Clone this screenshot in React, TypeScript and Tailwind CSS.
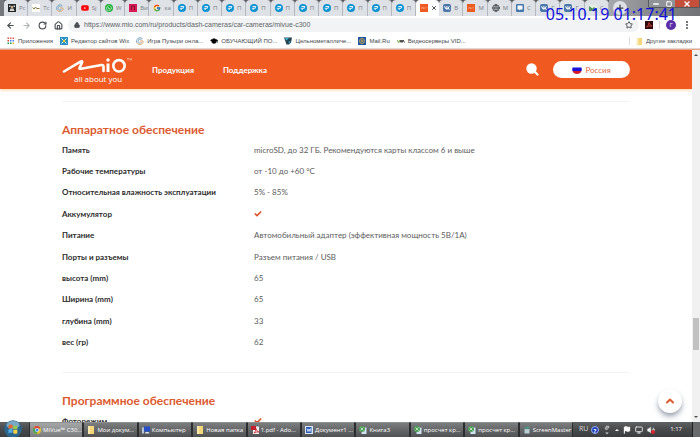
import { ReactNode } from 'react';
import clsx from 'clsx';
import {
  ArrowLeft,
  ArrowRight,
  Check,
  ChevronUp,
  Flag,
  Globe,
  GraduationCap,
  House,
  Lock,
  Minus,
  Monitor,
  MoreVertical,
  Plus,
  RotateCw,
  Square,
  Star,
  Volume2,
  X,
} from 'lucide-react';
import { FaWhatsapp, FaYoutube, FaVk } from 'react-icons/fa';
import { FcGoogle } from 'react-icons/fc';

type IconName =
  | 'dark'
  | 'wave'
  | 'swirl'
  | 'youtube'
  | 'whatsapp'
  | 'pink'
  | 'google'
  | 'blue'
  | 'mio'
  | 'vk'
  | 'globe'
  | 'chat'
  | 'photo';

interface Tab {
  icon: IconName;
  title: string;
  active?: boolean;
}

const tabs: Tab[] = [
  { icon: 'dark', title: 'Рс' },
  { icon: 'wave', title: 'Тс' },
  { icon: 'swirl', title: 'И' },
  { icon: 'youtube', title: 'Sj' },
  { icon: 'whatsapp', title: 'W' },
  { icon: 'pink', title: 'Ви' },
  { icon: 'google', title: 'ка' },
  ...Array.from({ length: 10 }, (): Tab => ({ icon: 'blue', title: 'П' })),
  { icon: 'mio', title: '', active: true },
  { icon: 'vk', title: 'В' },
  { icon: 'mio', title: 'М' },
  { icon: 'globe', title: 'М' },
  { icon: 'chat', title: 'С' },
  { icon: 'vk', title: 'Г' },
  { icon: 'vk', title: 'Г' },
  { icon: 'photo', title: 'С' },
];

const hardware: [string, string | true][] = [
  ['Память', 'microSD, до 32 ГБ. Рекомендуются карты классом 6 и выше'],
  ['Рабочие температуры', 'от -10 до +60 °C'],
  ['Относительная влажность эксплуатации', '5% - 85%'],
  ['Аккумулятор', true],
  ['Питание', 'Автомобильный адаптер (эффективная мощность 5В/1А)'],
  ['Порты и разъемы', 'Разъем питания / USB'],
  ['высота (mm)', '65'],
  ['Ширина (mm)', '65'],
  ['глубина (mm)', '33'],
  ['вес (гр)', '62'],
];

function SwirlIcon() {
  return (
    <svg viewBox="0 0 16 16" className="size-2 shrink-0" fill="none" strokeWidth="2">
      <path d="M13 3.5A7 7 0 0 0 2 12" stroke="#7fa9c4" />
      <path d="M2 12a7 7 0 0 0 12-1V8H8" stroke="#e2a86a" />
      <path d="M11 5.5A4 4 0 1 0 11 11" stroke="#86acc2" />
    </svg>
  );
}

function Favicon({ name }: { name: IconName }) {
  switch (name) {
    case 'dark':
      return (
        <svg viewBox="0 0 16 16" className="size-2 shrink-0">
          <rect width="16" height="16" fill="#23272b" />
          <path d="M2 3h3v3H2zM11 3h3v3h-3zM3 14l2-5h6l2 5z" fill="#d5d5d0" />
          <circle cx="8" cy="6" r="2.5" fill="#c9a986" />
        </svg>
      );
    case 'wave':
      return (
        <svg viewBox="0 0 16 16" className="size-2 shrink-0" fill="none">
          <rect width="16" height="16" fill="#fff" />
          <path d="M1 7l3 3 3-4 2 3h6" stroke="#8a7b3c" strokeWidth="2" />
        </svg>
      );
    case 'swirl':
      return <SwirlIcon />;
    case 'youtube':
      return <FaYoutube className="size-2 shrink-0 text-[#f00]" />;
    case 'whatsapp':
      return (
        <span className="grid size-2 shrink-0 place-items-center rounded-full bg-[#1faf38] text-white">
          <FaWhatsapp className="size-1.5" />
        </span>
      );
    case 'pink':
      return (
        <svg viewBox="0 0 16 16" className="size-2 shrink-0">
          <rect width="16" height="16" fill="#d81b52" />
          <path d="M5 12V4h6v8" stroke="#7d1537" strokeWidth="2" fill="none" />
        </svg>
      );
    case 'google':
      return <FcGoogle className="size-2 shrink-0" />;
    case 'blue':
      return (
        <svg viewBox="0 0 16 16" className="size-2 shrink-0">
          <circle cx="8" cy="8" r="8" fill="#0d92d2" />
          <path d="M3.500 8.500h3.500L6 12M5 5h6.500l-1 3.500H7" stroke="#fff" strokeWidth="1.800" fill="none" />
        </svg>
      );
    case 'mio':
      return (
        <svg viewBox="0 0 16 16" className="size-2 shrink-0">
          <rect width="16" height="16" fill="#ee5a20" />
          <path d="M2 9l4-3v3l4-1M12 6v3" stroke="#ffc9b0" strokeWidth="1.200" fill="none" />
        </svg>
      );
    case 'vk':
      return (
        <span className="grid size-2 shrink-0 place-items-center rounded-xs bg-[#4a76a8] text-white">
          <FaVk className="size-1.5" />
        </span>
      );
    case 'globe':
      return <Globe className="size-2 shrink-0 text-[#4c5054]" strokeWidth={3} />;
    case 'chat':
      return (
        <svg viewBox="0 0 16 16" className="size-2 shrink-0">
          <rect width="16" height="16" rx="2" fill="#4377ad" />
          <path d="M3 3h10v8H9l-2 2v-2H3z" fill="#fff" />
        </svg>
      );
    case 'photo':
      return (
        <svg viewBox="0 0 16 16" className="size-2 shrink-0">
          <rect width="16" height="12" y="2" fill="#e7efe4" />
          <path d="M0 4l7 5 3-3 6 6v2H0z" fill="#4f8f5d" />
        </svg>
      );
  }
}

function TabStrip() {
  return (
    <div className="flex h-4 bg-[#74777c] pl-1">
      <div className="flex min-w-0 flex-1 bg-gradient-to-b from-[#55585c] from-20% to-[#dee1e6] to-20%">
        {tabs.map((tab, i) => (
          <button
            key={i}
            aria-label={tab.title || 'MiVue C300'}
            className={clsx(
              'flex min-w-0 flex-1 items-center gap-[3px] rounded-t-sm pl-1 text-[6px]',
              tab.active ? 'bg-white' : 'border-r border-[#b4b8be] bg-[#dee1e6] text-[#797d82]',
            )}
          >
            <Favicon name={tab.icon} />
            {tab.active ? <X className="size-1.5 shrink-0 text-[#4d5156]" strokeWidth={4} /> : tab.title}
          </button>
        ))}
      </div>
      <div className="flex w-[91px] items-start justify-between bg-gradient-to-r from-[#a5a8ac] via-[#85878a] to-[#707275] pl-1">
        <button aria-label="Новая вкладка" className="mt-px grid size-3.5 place-items-center rounded-full bg-[#dee1e6]">
          <Plus className="size-2.5 text-[#3f4347]" strokeWidth={3} />
        </button>
        <div className="flex h-2 overflow-hidden rounded-b-xs border-x border-b border-[#55585c] text-white">
          <button aria-label="Свернуть" className="grid w-3.5 place-items-center bg-[#8f9296]">
            <Minus className="size-2" strokeWidth={4} />
          </button>
          <button aria-label="Свернуть в окно" className="grid w-3 place-items-center bg-[#8f9296]">
            <Square className="size-1.5" strokeWidth={4} />
          </button>
          <button aria-label="Закрыть" className="grid w-6 place-items-center bg-[#c4503c]">
            <X className="size-2" strokeWidth={4} />
          </button>
        </div>
      </div>
    </div>
  );
}

function AddressBar() {
  return (
    <div className="flex h-[18px] items-center pr-2 pl-1.5 text-[#4b4f54]">
      <div className="flex w-[62px] items-center gap-[7px]">
        <button aria-label="Назад"><ArrowLeft className="size-[9px]" strokeWidth={3} /></button>
        <button aria-label="Вперёд"><ArrowRight className="size-[9px] text-[#b4b7ba]" strokeWidth={3} /></button>
        <button aria-label="Обновить"><RotateCw className="size-[9px]" strokeWidth={3} /></button>
        <button aria-label="Главная"><House className="size-[9px]" strokeWidth={3} /></button>
      </div>
      <div className="flex h-3.5 min-w-0 flex-1 items-center gap-1 rounded-full bg-[#f1f3f4] px-1.5">
        <Lock className="size-1.5 shrink-0 fill-current" strokeWidth={3} />
        <input
          aria-label="Адресная строка"
          className="min-w-0 flex-1 bg-transparent font-['Liberation_Sans',sans-serif] text-[7px] text-[#5f6368] outline-none"
          defaultValue="https://www.mio.com/ru/products/dash-cameras/car-cameras/mivue-c300"
        />
        <button aria-label="Добавить в закладки"><Star className="size-2" strokeWidth={3} /></button>
      </div>
      <button aria-label="Adobe Acrobat" className="ml-1.5 bg-[#2b0b0b]">
        <svg viewBox="0 0 16 16" className="size-2" fill="none">
          <path d="M3 12q5-3 5-9 1 6 6 7-6-1-11 2" stroke="#e4483c" strokeWidth="1.500" />
        </svg>
      </button>
      <span className="mx-1.5 h-2 w-px bg-[#dadce0]" />
      <button className="grid size-2.5 place-items-center rounded-full bg-[#5b2fa8] text-[6px] text-white">Г</button>
      <button aria-label="Меню" className="ml-1.5"><MoreVertical className="size-2.5" strokeWidth={3} /></button>
    </div>
  );
}

function Bookmark({ icon, children }: { icon: ReactNode; children: ReactNode }) {
  return (
    <a href="#" className="flex items-center gap-[3px] whitespace-nowrap">
      {icon}
      {children}
    </a>
  );
}

function FolderIcon({ className }: { className: string }) {
  return (
    <svg viewBox="0 0 16 16" className={className}>
      <path d="M2 0h12v16H2z" fill="#f5d77a" />
      <path d="M2 0h4v16H2z" fill="#fbe9ae" />
    </svg>
  );
}

function BookmarksBar() {
  return (
    <nav className="flex h-[15px] items-center gap-[7px] border-b border-[#e3d6d0] pr-2 pl-[7px] font-['Liberation_Sans',sans-serif] text-[6px] text-[#43474c]">
      <Bookmark
        icon={
          <svg viewBox="0 0 16 16" className="size-2">
            <path d="M1 1h3v3H1zM1 6h3v3H1z" fill="#db4437" />
            <path d="M6 1h3v3H6zM11 1h3v3h-3z" fill="#e0604f" />
            <path d="M6 6h3v3H6zM11 6h3v3h-3z" fill="#4285f4" />
            <path d="M1 11h3v3H1zM6 11h3v3H6z" fill="#0f9d58" />
            <path d="M11 11h3v3h-3z" fill="#f4b400" />
          </svg>
        }
      >
        Приложения
      </Bookmark>
      <Bookmark
        icon={
          <svg viewBox="0 0 16 16" className="size-2">
            <rect width="16" height="16" fill="#2a8fc4" />
            <path d="M3 3l10 10M13 3L3 13" stroke="#fff" strokeWidth="2" />
            <circle cx="8" cy="8" r="2.500" fill="#f4d02e" />
          </svg>
        }
      >
        Редактор сайтов Wix
      </Bookmark>
      <Bookmark icon={<SwirlIcon />}>Игра Пузыри онла...</Bookmark>
      <Bookmark icon={<GraduationCap className="size-2 fill-black text-black" />}>ОБУЧАЮЩИЙ ПО...</Bookmark>
      <Bookmark
        icon={
          <svg viewBox="0 0 16 16" className="size-2">
            <path d="M0 1h16l-2 10-4 4H5z" fill="#25434f" />
            <path d="M1 2h9l-5 5zM9 9h5l-4 4z" fill="#35b4cf" />
          </svg>
        }
      >
        Цельнометалличе...
      </Bookmark>
      <Bookmark
        icon={
          <svg viewBox="0 0 16 16" className="size-2" fill="none">
            <rect width="16" height="16" fill="#1d56a5" />
            <circle cx="8" cy="8" r="5" stroke="#f2b53c" strokeWidth="1.500" />
            <circle cx="8" cy="8" r="2" stroke="#f2b53c" strokeWidth="1.500" />
          </svg>
        }
      >
        Mail.Ru
      </Bookmark>
      <Bookmark
        icon={
          <svg viewBox="0 0 16 16" className="size-2" fill="none" strokeWidth="2">
            <path d="M0 6l3 5 3-5" stroke="#6fa53a" />
            <path d="M6 11l2-5 2 5 2-5 3 5" stroke="#333" />
          </svg>
        }
      >
        Видеосерверы VID...
      </Bookmark>
      <div className="ml-auto flex items-center gap-1.5">
        <span className="h-2 w-px bg-[#dadce0]" />
        <Bookmark icon={<FolderIcon className="size-[7px]" />}>Другие закладки</Bookmark>
      </div>
    </nav>
  );
}

function MioLogo() {
  return (
    <a href="#" aria-label="Mio" className="flex w-[70px] flex-col text-white">
      <svg viewBox="0 0 70 17" className="h-[17px] w-[70px]" fill="none" stroke="currentColor">
        <path d="M2 14.500L18.500 4.600q2.500-1.200 1.500 1L17.500 11Q17 12 19 11.700L39.500 8q2-.3 2 1.500V14" strokeWidth="2.600" strokeLinejoin="round" strokeLinecap="round" />
        <path d="M46 6.500V15" strokeWidth="3" />
        <circle cx="46" cy="3" r="1.700" fill="currentColor" stroke="none" />
        <circle cx="57" cy="8.800" r="5.700" strokeWidth="2.600" />
        <path d="M65 1.500h2M66 1.500v2M68 3.500v-2l.8 1 .8-1v2" strokeWidth=".4" />
      </svg>
      <span className="pl-3 font-['Open_Sans',sans-serif] text-[8px] leading-[9px]">all about you</span>
    </a>
  );
}

function SiteHeader() {
  return (
    <header className="flex h-[39px] shrink-0 items-center bg-[#f05a20] px-[62px] text-white shadow-sm shadow-orange-200">
      <MioLogo />
      <nav className="ml-5 flex gap-[29px] text-[8px] font-bold">
        <a href="#">Продукция</a>
        <a href="#">Поддержка</a>
      </nav>
      <button aria-label="Поиск" className="ml-auto">
        <svg viewBox="0 0 13 13" className="size-[13px]">
          <circle cx="5.500" cy="5.500" r="5.200" fill="currentColor" />
          <path d="M8.500 8.500l3 3" stroke="currentColor" strokeWidth="2.200" strokeLinecap="round" />
        </svg>
      </button>
      <button className="ml-3.5 flex h-[17px] w-[77px] items-center justify-center gap-[3px] rounded-full bg-white text-[8px] text-[#e0683c]">
        <svg viewBox="0 0 10 10" className="size-[10px]">
          <path d="M.6 2.500h8.800a4.700 4.700 0 0 1 .1 3.500H.5a4.700 4.700 0 0 1 .1-3.500z" fill="#1b12d8" />
          <path d="M.5 6h9a4.700 4.300 0 0 1-9 0z" fill="#d51a2b" />
        </svg>
        Россия
      </button>
    </header>
  );
}

function SpecTable({ title, rows, className }: { title: string; rows: [string, string | true][]; className?: string }) {
  return (
    <section className="border-t border-[#f3f3f3] pt-5">
      <h2 className="text-[12px] leading-4 font-bold text-[#dc5c30]">{title}</h2>
      <table className={clsx('mt-px w-full text-left text-[8px] leading-3', className)}>
        <tbody>
          {rows.map(([label, value]) => (
            <tr key={label} className="h-[21px]">
              <th className="w-48 p-0 font-bold text-[#2c2c2c]">{label}</th>
              <td className="p-0 text-[#5c5c5c]">
                {value === true ? <Check aria-label="Да" className="size-2 text-[#dc5528]" strokeWidth={5} /> : value}
              </td>
            </tr>
          ))}
        </tbody>
      </table>
    </section>
  );
}

function Scrollbar() {
  return (
    <div className="flex w-2 shrink-0 flex-col items-center bg-[#f1f1f1] py-1">
      <span className="border-x-2 border-b-2 border-x-transparent border-b-[#505050]" />
      <span className="grow-4" />
      <span className="h-8 w-1.5 bg-[#c1c1c1]" />
      <span className="grow" />
      <span className="border-x-2 border-t-2 border-x-transparent border-t-[#505050]" />
    </div>
  );
}

function ExcelIcon() {
  return (
    <svg viewBox="0 0 16 16" className="size-2 shrink-0">
      <path d="M5 3h10v13H5z" fill="#cfe3f0" />
      <circle cx="6" cy="6" r="6" fill="#4f9f58" />
      <path d="M3 3l6 6M9 3L3 9" stroke="#d8f0d4" strokeWidth="1.500" />
    </svg>
  );
}

function ChromeIcon() {
  return (
    <svg viewBox="0 0 16 16" className="size-2 shrink-0">
      <circle cx="8" cy="8" r="8" fill="#e8c22c" />
      <path d="M1 4a8 8 0 0 1 14 0L8 8z" fill="#db4a39" />
      <path d="M1 4a8 8 0 0 0 6 12l3-7z" fill="#3fa554" />
      <circle cx="8" cy="8" r="4" fill="#fff" />
      <circle cx="8" cy="8" r="3" fill="#4285f4" />
    </svg>
  );
}

const tasks: { icon: ReactNode; title: string; active?: boolean }[] = [
  { icon: <ChromeIcon />, title: 'MiVue™ C30...', active: true },
  { icon: <FolderIcon className="size-2 shrink-0" />, title: 'Мои докум...' },
  {
    icon: (
      <svg viewBox="0 0 16 16" className="size-2 shrink-0">
        <rect x="4" y="1" width="12" height="10" fill="#2750c8" />
        <path d="M0 3h4v12H0z" fill="#b9c4d6" />
        <path d="M7 12h6l2 3H6z" fill="#dfe4ec" />
      </svg>
    ),
    title: 'Компьютер',
  },
  { icon: <FolderIcon className="size-2 shrink-0" />, title: 'Новая папка' },
  {
    icon: (
      <svg viewBox="0 0 16 16" className="size-2 shrink-0" fill="none">
        <path d="M4 1h12v15H4z" fill="#f3eded" />
        <path d="M0 0h10v8H0z" fill="#c3202b" />
        <path d="M6 14q4-3 4-9 1 6 6 7-5-1-10 2" stroke="#c3202b" strokeWidth="1.500" />
      </svg>
    ),
    title: '1.pdf - Ado...',
  },
  {
    icon: (
      <svg viewBox="0 0 16 16" className="size-2 shrink-0" fill="none">
        <rect width="16" height="16" fill="#dce7f6" />
        <rect x="2" y="2" width="11" height="12" fill="#2a5bb5" />
        <path d="M4 5l2 6 2-5 2 5 1-6" stroke="#fff" strokeWidth="1.500" />
      </svg>
    ),
    title: 'Документ1 ...',
  },
  { icon: <ExcelIcon />, title: 'Книга3' },
  { icon: <ExcelIcon />, title: 'просчет кр...' },
  { icon: <ExcelIcon />, title: 'просчет кр...' },
  {
    icon: (
      <svg viewBox="0 0 16 16" className="size-2 shrink-0">
        <path d="M3 6h10v9H3z" fill="#b7cfd3" />
        <path d="M1 3l8-3 6 3-8 4z" fill="#548f84" />
      </svg>
    ),
    title: 'ScreenMaster',
  },
];

function Taskbar() {
  return (
    <footer className="flex h-[15px] shrink-0 bg-gradient-to-b from-[#606163] via-[#48494b] to-[#3c3d3f] text-[6px] text-white">
      <button aria-label="Пуск" className="relative w-[29px]">
        <svg viewBox="0 0 18 18" className="absolute -top-0.5 left-1 size-[18px]">
          <circle cx="9" cy="9" r="8.800" fill="#2d668c" />
          <ellipse cx="9" cy="5" rx="6.500" ry="4" fill="#79a9c4" />
          <path d="M4.500 5.500q2-1.500 4-.5v3.500q-2-1-4 .5z" fill="#e8632e" />
          <path d="M9.300 5.200q2 1 4 0v3.700q-2 1-4 0z" fill="#95c64a" />
          <path d="M4.500 9.700q2-1.300 4-.4v3.700q-2-1-4 .4z" fill="#54b0e4" />
          <path d="M9.300 9.600q2 1 4 0v3.700q-2 1-4 0z" fill="#f7cf45" />
        </svg>
      </button>
      <div className="flex min-w-0 flex-1">
        {tasks.map((task, i) => (
          <button
            key={i}
            className={clsx(
              'flex min-w-0 flex-1 items-center gap-0.5 overflow-hidden border-x border-t border-[#2c2d2f] border-t-[#8e8f91] pl-[3px] whitespace-nowrap',
              task.active
                ? 'bg-gradient-to-b from-[#a5a6a8] to-[#7b7c7e]'
                : 'bg-gradient-to-b from-[#7c7d7f] to-[#505153]',
            )}
          >
            {task.icon}
            {task.title}
          </button>
        ))}
      </div>
      <div className="flex w-[127px] items-center pl-1.5 text-[7px] text-[#d8d8d8]">
        <span className="w-3">RU</span>
        <span className="grid size-2 place-items-center rounded-full border border-[#9db2f0] bg-[#1c3bb8] text-[6px] font-bold text-white">?</span>
        <svg viewBox="0 0 8 12" className="ml-1 h-2.5 w-2" fill="none" stroke="currentColor">
          <path d="M3 1.500h3v2H3zM2 3v2h3" />
          <path d="M2 9h4l-2 2z" fill="currentColor" stroke="none" />
        </svg>
        <span className="mx-1 border-x-2 border-b-2 border-x-transparent border-b-white" />
        <Flag className="mr-1 size-2 fill-white text-white" strokeWidth={3} />
        <Monitor className="mr-1 size-2" strokeWidth={3} />
        <span className="relative">
          <Volume2 className="size-2 fill-white" strokeWidth={2} />
          <span className="absolute right-0 bottom-0 size-1 rounded-full bg-[#d8242c]" />
        </span>
        <time className="ml-auto pr-2.5 text-[6px] text-white">1:17</time>
        <button aria-label="Свернуть все окна" className="h-full w-2 border-l border-[#222] bg-[#696a6c]" />
      </div>
    </footer>
  );
}

export default function App() {
  return (
    <div className="flex h-screen flex-col overflow-hidden bg-white font-['Open_Sans','Noto_Sans',sans-serif]">
      <div className="relative shrink-0">
        <TabStrip />
        <AddressBar />
        <BookmarksBar />
        <time className="absolute top-1 right-[23px] font-['Noto_Sans',sans-serif] text-[16px] leading-5 text-[#1010dc]">
          05.10.19 01:17:41
        </time>
      </div>

      <div className="relative flex min-h-0 flex-1 border-t border-[#e8a58a]">
        <div className="flex min-w-0 flex-1 flex-col overflow-hidden font-['Lato',sans-serif]">
          <SiteHeader />
          <main className="flex flex-col gap-[19px] px-[62px] pt-3">
            <SpecTable title="Аппаратное обеспечение" rows={hardware} className="h-[214px]" />
            <SpecTable title="Программное обеспечение" rows={[['Фоторежим', true]]} />
          </main>
        </div>
        <Scrollbar />
        {/* Back to top */}
        <button
          aria-label="Наверх"
          className="absolute right-[18px] bottom-[9px] grid size-6 place-items-center rounded-full bg-white shadow-md shadow-gray-400"
        >
          <ChevronUp className="size-3 text-[#dc5c30]" strokeWidth={4} />
        </button>
      </div>

      <Taskbar />
    </div>
  );
}
